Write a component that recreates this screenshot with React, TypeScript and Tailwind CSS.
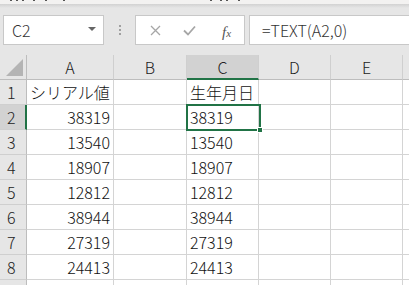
import React from "react";

const cols = [
  { key: "A", w: 87 },
  { key: "B", w: 73 },
  { key: "C", w: 72 },
  { key: "D", w: 72 },
  { key: "E", w: 72 },
  { key: "", w: 72 },
];

const data: [string, string, string][] = [
  ["シリアル値", "", "生年月日"],
  ["38319", "", "38319"],
  ["13540", "", "13540"],
  ["18907", "", "18907"],
  ["12812", "", "12812"],
  ["38944", "", "38944"],
  ["27319", "", "27319"],
  ["24413", "", "24413"],
  ["", "", ""],
];

const font = { fontFamily: '"Noto Sans CJK JP", "Noto Sans", sans-serif' };

const marks = [10, 16, 22, 33, 45, 63, 210, 220, 226, 238];

export default function App() {
  return (
    <div className="w-[409px] h-[285px] overflow-hidden bg-[#e6e6e6] relative font-light" style={font}>
      {/* top ribbon remnant */}
      <div className="h-[4px] bg-[#f3f2f1] relative">
        {marks.map((x) => (
          <div key={x} className="absolute top-0 w-[2px] h-[1px] bg-[#555]" style={{ left: x }} />
        ))}
      </div>
      <div className="h-[4px] bg-gradient-to-b from-[#d2d2d2] to-[#e6e6e6]" />
      {/* formula bar */}
      <div className="flex items-center h-[30px] mt-[7px]">
        <div className="ml-[3px] w-[101px] h-[30px] bg-white border border-[#c8c8c8] flex items-center justify-between pl-[8px] pr-[7px]">
          <span className="text-[16px] text-[#333] leading-none">C2</span>
          <div className="w-0 h-0 border-l-[4px] border-r-[4px] border-t-[4px] border-l-transparent border-r-transparent border-t-[#666] mb-[2px]" />
        </div>
        <div className="w-[31px] flex flex-col items-center gap-[2px]">
          <div className="w-[2px] h-[2px] bg-[#a0a0a0]" />
          <div className="w-[2px] h-[2px] bg-[#a0a0a0]" />
          <div className="w-[2px] h-[2px] bg-[#a0a0a0]" />
        </div>
        <div className="w-[110px] h-[30px] bg-white border border-[#c8c8c8] flex items-center relative">
          <svg className="absolute left-[14px] top-[9px]" width="11" height="11" viewBox="0 0 11 11">
            <path d="M1 1 L10 10 M10 1 L1 10" stroke="#a6a6a6" strokeWidth="1.3" fill="none" />
          </svg>
          <svg className="absolute left-[47px] top-[9px]" width="13" height="11" viewBox="0 0 13 11">
            <path d="M1 5.5 L5 9.5 L12 1.5" stroke="#a6a6a6" strokeWidth="1.8" fill="none" />
          </svg>
          <span
            className="absolute left-[86px] top-[5px] text-[15px] text-[#555] italic font-normal"
            style={{ fontFamily: '"Liberation Serif", serif' }}
          >
            f<span className="text-[11px]">x</span>
          </span>
        </div>
        <div className="ml-[4px] flex-1 h-[30px] bg-white border border-[#c8c8c8] border-r-0 flex items-center pl-[12px]">
          <span className="text-[16px] text-[#333] leading-none">=TEXT(A2,0)</span>
        </div>
      </div>
      {/* grid */}
      <div className="mt-[10px] relative">
        {/* header row */}
        <div className="flex h-[25px]">
          <div className="w-[27px] shrink-0 h-full bg-[#e6e6e6] border-r border-b border-[#bdbdbd] relative">
            <div
              className="absolute right-[3px] bottom-[3px]"
              style={{ borderBottom: "17px solid #b4b4b4", borderLeft: "17px solid transparent", width: 0, height: 0 }}
            />
          </div>
          {cols.map((c) => (
            <div
              key={c.key || "F"}
              style={{ width: c.w }}
              className={
                "shrink-0 h-full flex items-center justify-center text-[16px] text-[#222] border-r border-[#cfcfcf] " +
                (c.key === "C" ? "bg-[#d2d2d2] border-b-2 border-b-[#217346]" : "bg-[#e6e6e6] border-b border-b-[#bdbdbd]")
              }
            >
              {c.key}
            </div>
          ))}
        </div>
        {data.map((row, i) => (
          <div key={i} className="flex h-[25px]">
            <div
              className={
                "w-[27px] shrink-0 h-full flex items-center pl-[7px] text-[16px] text-[#222] border-b border-[#cfcfcf] " +
                (i === 1 ? "bg-[#d2d2d2] border-r-2 border-r-[#217346]" : "bg-[#e6e6e6] border-r border-r-[#bdbdbd]")
              }
            >
              {i < 8 ? i + 1 : ""}
            </div>
            {cols.map((c, j) => {
              const v = row[j] ?? "";
              const isNum = j === 0 && i > 0;
              return (
                <div
                  key={c.key || "F"}
                  style={{ width: c.w }}
                  className={
                    "shrink-0 h-full bg-white border-r border-b border-[#d4d4d4] flex items-center text-[16px] text-[#111] whitespace-nowrap overflow-hidden " +
                    (isNum ? "justify-end pr-[3px]" : "pl-[3px]")
                  }
                >
                  {v}
                </div>
              );
            })}
          </div>
        ))}
        {/* selection C2 */}
        <div className="absolute left-[186px] top-[49px] w-[75px] h-[27px] border-2 border-[#217346] pointer-events-none" />
        <div className="absolute left-[257px] top-[72px] w-[6px] h-[6px] bg-[#217346] border border-white" />
      </div>
    </div>
  );
}
